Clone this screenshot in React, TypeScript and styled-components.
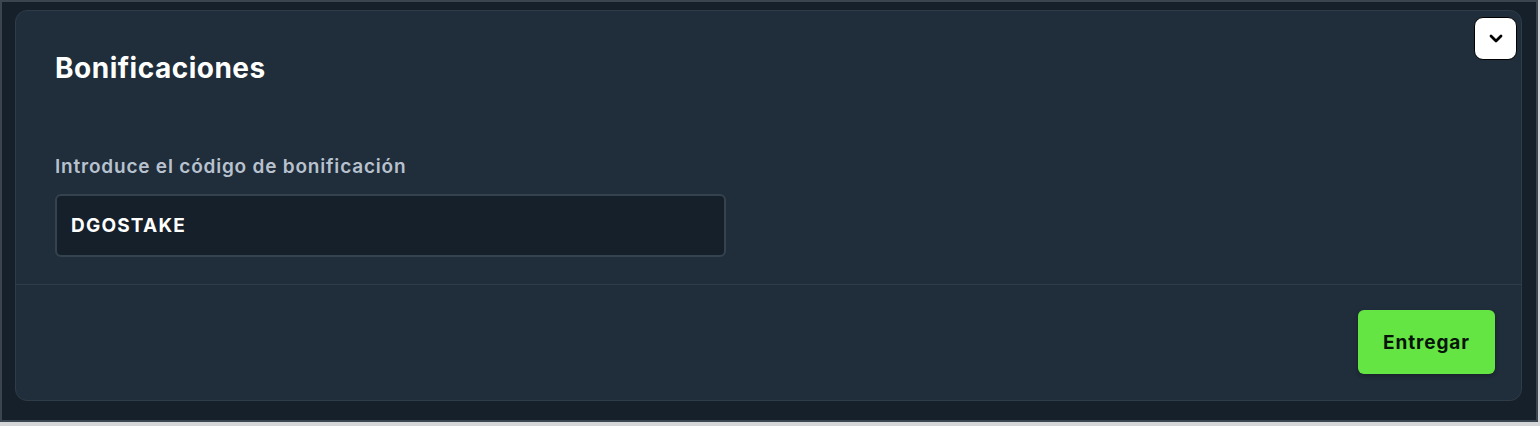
import React from "react";
import styled, { createGlobalStyle } from "styled-components";

const Global = createGlobalStyle`
  html, body { margin: 0; padding: 0; background: #d4d6d8; }
  body { font-family: Inter, "Open Sans", "Liberation Sans", sans-serif; }
  * { box-sizing: border-box; }
`;

const Frame = styled.div`
  width: 1538px;
  height: 422px;
  border: 2px solid #3a4550;
  background: #15202a;
  padding: 8px 14px 0 13px;
`;

const Card = styled.section`
  position: relative;
  display: flex;
  flex-direction: column;
  background: #202d3a;
  border: 1px solid #2e3b48;
  border-radius: 12px;
  height: 391px;
`;

const Toggle = styled.button`
  position: absolute;
  top: 6px;
  right: 4px;
  width: 43px;
  height: 43px;
  border-radius: 9px;
  border: 1.5px solid #000;
  background: #fff;
  display: flex;
  align-items: center;
  justify-content: center;
  padding: 0;
  cursor: pointer;
`;

const Body = styled.div`
  padding: 40px 39px 27px;
  display: flex;
  flex-direction: column;
  border-bottom: 1px solid #2f3d4a;
`;

const Title = styled.h2`
  margin: 0;
  font-size: 28px;
  line-height: 34px;
  font-weight: 700;
  color: #ffffff;
  letter-spacing: 0.5px;
`;

const Field = styled.label`
  margin-top: 69px;
  display: flex;
  flex-direction: column;
  gap: 15px;
`;

const LabelText = styled.span`
  font-size: 19px;
  line-height: 25px;
  font-weight: 600;
  color: #b8c2cf;
  letter-spacing: 0.8px;
`;

const Input = styled.input`
  width: 671px;
  height: 63px;
  border: 2px solid #34434f;
  border-radius: 6px;
  background: #15202b;
  color: #ffffff;
  font-family: Inter, "Open Sans", "Liberation Sans", sans-serif;
  font-size: 19px;
  font-weight: 700;
  letter-spacing: 1.2px;
  padding: 0 14px;
  outline: none;
`;

const Footer = styled.div`
  flex: 1;
  display: flex;
  justify-content: flex-end;
  align-items: flex-start;
  padding: 25px 26px 24px;
`;

const SubmitButton = styled.button`
  width: 137px;
  height: 64px;
  border: none;
  border-radius: 6px;
  background: #64e544;
  color: #07140a;
  font-family: Inter, "Open Sans", "Liberation Sans", sans-serif;
  font-size: 19px;
  font-weight: 700;
  letter-spacing: 0.9px;
  box-shadow: 0 2px 4px rgba(0, 0, 0, 0.25);
  cursor: pointer;
`;

export default function App() {
  return (
    <>
      <Global />
      <Frame>
        <Card>
          <Toggle aria-label="Expandir">
            <svg width="14" height="9" viewBox="0 0 14 9" fill="none">
              <path d="M2 2l5 5 5-5" stroke="#000" strokeWidth="2.8" strokeLinecap="round" strokeLinejoin="round" />
            </svg>
          </Toggle>
          <Body>
            <Title>Bonificaciones</Title>
            <Field>
              <LabelText>Introduce el código de bonificación</LabelText>
              <Input defaultValue="DGOSTAKE" />
            </Field>
          </Body>
          <Footer>
            <SubmitButton>Entregar</SubmitButton>
          </Footer>
        </Card>
      </Frame>
    </>
  );
}
